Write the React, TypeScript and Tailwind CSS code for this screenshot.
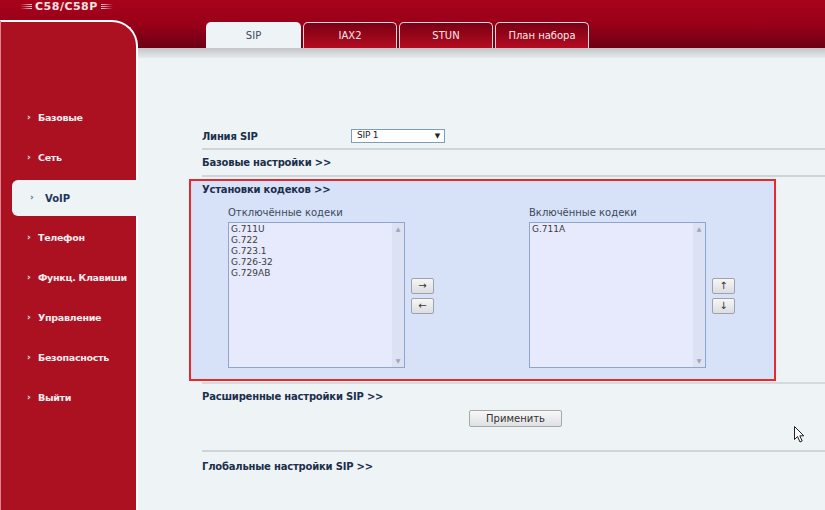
import React from "react";

function Lines() {
  return (
    <div className="flex flex-col gap-[1px] w-[12px]">
      <div className="h-[1px] bg-[linear-gradient(to_right,transparent,#f4d8dc)]" />
      <div className="h-[1px] bg-[linear-gradient(to_right,transparent,#f4d8dc)]" />
      <div className="h-[1px] bg-[linear-gradient(to_right,transparent,#f4d8dc)]" />
    </div>
  );
}

function SmallBtn({ label }: { label: string }) {
  return (
    <div className="w-[23px] h-[16px] border border-[#9ca3ad] rounded-[2px] bg-[linear-gradient(to_bottom,#f6f6f6,#dcdde0)] flex items-center justify-center text-[10px] leading-none text-[#333]">
      {label}
    </div>
  );
}

function ListBox({ items }: { items: string[] }) {
  return (
    <div className="w-[177px] h-[146px] mt-[3px] border border-[#8ea6cc] bg-[#e7eafc] flex">
      <div className="flex-1 pl-[2px] pt-[1px] text-[9px] leading-[11px] text-[#3c3c3c]">
        {items.map((i) => (
          <div key={i}>{i}</div>
        ))}
      </div>
      <div className="w-[12px] bg-[#dce1f3] flex flex-col justify-between items-center py-[3px] text-[6px] leading-none text-[#a0a4ac]">
        <span>▲</span>
        <span>▼</span>
      </div>
    </div>
  );
}

export default function App() {
  const items = ["Базовые", "Сеть", "VoIP", "Телефон", "Функц. Клавиши", "Управление", "Безопасность", "Выйти"];
  const tabs = ["IAX2", "STUN", "План набора"];
  return (
    <div className="relative w-[825px] h-[510px] overflow-hidden flex bg-[#eef4f6] font-['DejaVu_Sans',sans-serif]">
      {/* sidebar column */}
      <div className="w-[138px] shrink-0 flex flex-col bg-[linear-gradient(to_bottom,#a8031b_0px,#990019_24px,#6c0014_48px,#eef4f6_48px)]">
        <div className="h-[20px] flex items-start pt-[1px] pl-[20px] gap-[3px]">
          <div className="mt-[3px]"><Lines /></div>
          <span className="text-[11px] font-bold leading-[12px] text-[#f6e4e6] tracking-[0.5px]">C58/C58P</span>
          <div className="mt-[3px] rotate-180"><Lines /></div>
        </div>
        <div className="flex-1 bg-[#ac1121] border-t-2 border-r-2 border-l border-t-white border-r-white border-l-[#d98893] rounded-tr-[26px] pt-[76px]">
          {items.map((it) => {
            const active = it === "VoIP";
            return (
              <div key={it} className="h-[40px] py-[2px] whitespace-nowrap">
                {active ? (
                  <div className="h-full ml-[11px] mr-[-2px] bg-[#eef4f6] rounded-l-[6px] flex items-center pl-[18px] text-[10px] font-bold text-[#1d3658]">
                    <span className="w-[15px] text-[#5a6a7a] text-[9px]">›</span>
                    <span>{it}</span>
                  </div>
                ) : (
                  <div className="h-full flex items-center pl-[26px] text-[9.5px] tracking-[-0.3px] font-bold text-[#fbecee]">
                    <span className="w-[11px] text-[9px]">›</span>
                    <span>{it}</span>
                  </div>
                )}
              </div>
            );
          })}
        </div>
      </div>

      {/* main column */}
      <div className="flex-1 flex flex-col">
        <div className="h-[48px] bg-[linear-gradient(to_bottom,#a8031b,#990019_50%,#6c0014)] flex items-end pl-[68px] gap-[2px]">
          <div className="w-[95px] h-[26px] rounded-t-[5px] bg-[#eef3f6] flex items-center justify-center text-[10px] text-[#3b4b5e]">
            SIP
          </div>
          {tabs.map((t) => (
            <div
              key={t}
              className="w-[94px] h-[26px] rounded-t-[5px] border border-b-0 border-[#f2d4d8] bg-[linear-gradient(to_bottom,#7a0014,#b30c20)] flex items-center justify-center text-[10px] text-[#f8e8ea]"
            >
              {t}
            </div>
          ))}
        </div>
        <div className="h-[10px] bg-[linear-gradient(to_bottom,#c2c6c8,#e6eaec)]" />

        <div className="flex-1 flex flex-col pl-[51px] pt-[66px] tracking-[-0.2px]">
          {/* Линия SIP */}
          <div className="h-[24px] ml-[13px] flex items-center">
            <span className="w-[149px] text-[10px] font-bold text-[#1c2f4c]">Линия SIP</span>
            <div className="w-[94px] h-[14px] border border-[#7f9db9] bg-white flex items-center justify-between pl-[5px] pr-[4px] text-[9px] text-[#222]">
              <span>SIP 1</span>
              <span className="text-[7px]">▼</span>
            </div>
          </div>
          <div className="h-[2px] ml-[13px] bg-[#d0d4d6]" />
          <div className="h-[25px] ml-[13px] flex items-center text-[10px] font-bold text-[#1c2f4c]">
            Базовые настройки &gt;&gt;
          </div>
          <div className="h-[2px] ml-[13px] bg-[#d0d4d6]" />

          {/* codec box */}
          <div className="mt-[2px] w-[587px] h-[202px] border-2 border-[#e8282c] bg-[#d7e1f8] flex flex-col">
            <div className="h-[16px] pl-[11px] flex items-center text-[10px] font-bold text-[#1c2f4c]">
              Установки кодеков &gt;&gt;
            </div>
            <div className="mt-[8px] pl-[37px] flex tracking-normal">
              <div className="flex flex-col">
                <div className="h-[14px] flex items-center text-[10px] text-[#3c4a5a]">Отключённые кодеки</div>
                <ListBox items={["G.711U", "G.722", "G.723.1", "G.726-32", "G.729AB"]} />
              </div>
              <div className="ml-[6px] mt-[73px] flex flex-col gap-[4px]">
                <SmallBtn label="→" />
                <SmallBtn label="←" />
              </div>
              <div className="ml-[95px] flex flex-col">
                <div className="h-[14px] flex items-center text-[10px] text-[#3c4a5a]">Включённые кодеки</div>
                <ListBox items={["G.711A"]} />
              </div>
              <div className="ml-[6px] mt-[73px] flex flex-col gap-[4px]">
                <SmallBtn label="↑" />
                <SmallBtn label="↓" />
              </div>
            </div>
          </div>

          <div className="mt-[1px] h-[2px] ml-[13px] bg-[#d6dadc]" />
          <div className="h-[24px] ml-[13px] flex items-center text-[10px] font-bold text-[#1c2f4c]">
            Расширенные настройки SIP &gt;&gt;
          </div>
          <div className="mt-[2px] ml-[280px] w-[93px] h-[17px] border border-[#a4a7ab] rounded-[2px] bg-[linear-gradient(to_bottom,#f8f8f8,#dfe0e2)] flex items-center justify-center text-[10px] tracking-normal text-[#333]">
            Применить
          </div>
          <div className="mt-[23px] h-[2px] ml-[13px] bg-[#d0d4d6]" />
          <div className="h-[28px] ml-[13px] flex items-center text-[10px] font-bold text-[#1c2f4c]">
            Глобальные настройки SIP &gt;&gt;
          </div>
        </div>
      </div>

      {/* mouse cursor */}
      <svg className="absolute left-[794px] top-[426px]" width="12" height="18" viewBox="0 0 12 18">
        <path d="M0.5 0.5 L0.5 13.5 L3.5 10.5 L6 16 L8.2 15 L5.8 9.8 L9.8 9.8 Z" fill="#fff" stroke="#222" strokeWidth="1" strokeLinejoin="round" />
      </svg>
    </div>
  );
}
